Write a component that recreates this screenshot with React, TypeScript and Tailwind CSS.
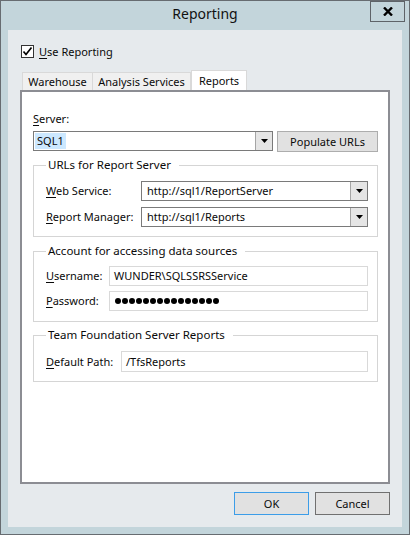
import React from 'react';

const Arrow: React.FC = () => (
  <svg width="7" height="4" viewBox="0 0 7 4">
    <polygon points="0,0 7,0 3.5,4" fill="#000" />
  </svg>
);

const Combo: React.FC<{ value: React.ReactNode; w: string; pl?: string }> = ({ value, w, pl = 'pl-[5px]' }) => (
  <div className={`${w} h-[20px] shrink-0 flex border border-[#7a7a7a] bg-white`}>
    <div className={`flex-1 flex items-center ${pl} whitespace-nowrap overflow-hidden`}>{value}</div>
    <div className="w-[17px] h-full flex items-center justify-center bg-[#e5e5e5] border-l border-[#a5a5a5]">
      <Arrow />
    </div>
  </div>
);

const TextBox: React.FC<{ children: React.ReactNode; w: string; h?: string }> = ({ children, w, h = 'h-[20px]' }) => (
  <div className={`${w} ${h} shrink-0 flex items-center pl-[4px] border border-[#d9d9d9] bg-white whitespace-nowrap`}>
    {children}
  </div>
);

const Group: React.FC<{ title: string; className?: string; children: React.ReactNode }> = ({ title, className = '', children }) => (
  <fieldset className={`border border-[#d5d5d5] pl-[12px] pr-[9px] ${className}`}>
    <legend className="leading-4 pl-[2px] pr-[8px] text-[11.5px]">{title}</legend>
    {children}
  </fieldset>
);

const Key: React.FC<{ k: string; rest: string }> = ({ k, rest }) => (
  <span className="whitespace-nowrap">
    <u className="underline-offset-2">{k}</u>
    {rest}
  </span>
);

const Row: React.FC<{ label: React.ReactNode; children: React.ReactNode }> = ({ label, children }) => (
  <div className="flex items-center justify-between">
    <div className="whitespace-nowrap">{label}</div>
    {children}
  </div>
);

const dots = Array.from({ length: 15 });

export default function App() {
  return (
    <div className="w-[410px] h-[535px] bg-[#c3d5db] border border-[#676c71] flex flex-col font-['Noto_Sans','Liberation_Sans',sans-serif] text-[11px] leading-4 text-[#0a0a0a]">
      {/* title bar */}
      <div className="h-[29px] relative flex items-center justify-center pb-[3px]">
        <span className="text-[14px] leading-5 text-[#111]">Reporting</span>
        <div className="absolute top-0 right-[4px] w-[35px] h-[21px] border border-[#5e6368] flex items-center justify-center">
          <svg width="10" height="9" viewBox="0 0 10 9">
            <path d="M1 0.5 L9 8.5 M9 0.5 L1 8.5" stroke="#000" strokeWidth="2.4" />
          </svg>
        </div>
      </div>

      {/* client area */}
      <div className="mx-[7px] w-[394px] h-[497px] bg-[#e6eaed] flex flex-col">
        <div className="mt-[15px] ml-[13px] flex items-center gap-[5px] h-[13px]">
          <div className="w-[13px] h-[13px] border border-[#333] bg-white flex items-center justify-center">
            <svg width="11" height="11" viewBox="0 0 11 11">
              <path d="M1.5 5.5 L4 8.5 L9.5 1.5" stroke="#000" strokeWidth="1.7" fill="none" />
            </svg>
          </div>
          <Key k="U" rest="se Reporting" />
        </div>

        {/* tabs */}
        <div className="mt-[12px] ml-[14px] h-[20px] flex items-end">
          <div className="w-[71px] h-[18px] border border-b-0 border-[#d9d9d9] bg-[#f0f0f0] flex items-center justify-center">Warehouse</div>
          <div className="w-[98px] h-[18px] border border-b-0 border-l-0 border-[#d9d9d9] bg-[#f0f0f0] flex items-center justify-center">Analysis Services</div>
          <div className="w-[56px] h-[20px] border border-b-0 border-[#d9d9d9] bg-white flex items-center justify-center">Reports</div>
        </div>

        {/* panel */}
        <div className="ml-[12px] w-[370px] h-[394px] border-2 border-[#8c8d93] bg-white pl-[11px] pr-[10px] pt-[19px] flex flex-col">
          <div>
            <Key k="S" rest="erver:" />
          </div>
          <div className="mt-[4px] flex items-start gap-[4px] h-[21px]">
            <Combo w="w-[240px]" pl="pl-[1px]" value={<span className="bg-[#cce8ff] px-[2px] leading-4">SQL1</span>} />
            <div className="w-[101px] h-[21px] border border-[#adadad] bg-[#e1e1e1] flex items-center justify-center">Populate URLs</div>
          </div>

          <Group title="URLs for Report Server" className="mt-[5px] pt-[8px] pb-[9px]">
            <div className="flex flex-col gap-[6px]">
              <Row label={<Key k="W" rest="eb Service:" />}>
                <Combo w="w-[227px]" value="http://sql1/ReportServer" />
              </Row>
              <Row label={<Key k="R" rest="eport Manager:" />}>
                <Combo w="w-[227px]" value="http://sql1/Reports" />
              </Row>
            </div>
          </Group>

          <Group title="Account for accessing data sources" className="mt-[6px] pt-[7px] pb-[10px]">
            <div className="flex flex-col gap-[5px]">
              <Row label={<Key k="U" rest="sername:" />}>
                <TextBox w="w-[259px]">WUNDER\SQLSSRSService</TextBox>
              </Row>
              <Row label={<Key k="P" rest="assword:" />}>
                <TextBox w="w-[259px]">
                  <div className="flex items-center gap-[1px] pl-[1px]">
                    {dots.map((_, i) => (
                      <span key={i} className="w-[6px] h-[6px] rounded-full bg-black" />
                    ))}
                  </div>
                </TextBox>
              </Row>
            </div>
          </Group>

          <Group title="Team Foundation Server Reports" className="mt-[5px] pt-[8px] pb-[9px]">
            <Row label={<Key k="D" rest="efault Path:" />}>
              <TextBox w="w-[247px]" h="h-[21px]">/TfsReports</TextBox>
            </Row>
          </Group>
        </div>

        {/* buttons */}
        <div className="mt-[8px] pr-[12px] flex justify-end gap-[6px]">
          <div className="w-[75px] h-[23px] border border-[#3c9de8] bg-[#e1e1e1] flex items-center justify-center">OK</div>
          <div className="w-[75px] h-[23px] border border-[#707070] bg-[#e1e1e1] flex items-center justify-center">Cancel</div>
        </div>
      </div>
    </div>
  );
}
